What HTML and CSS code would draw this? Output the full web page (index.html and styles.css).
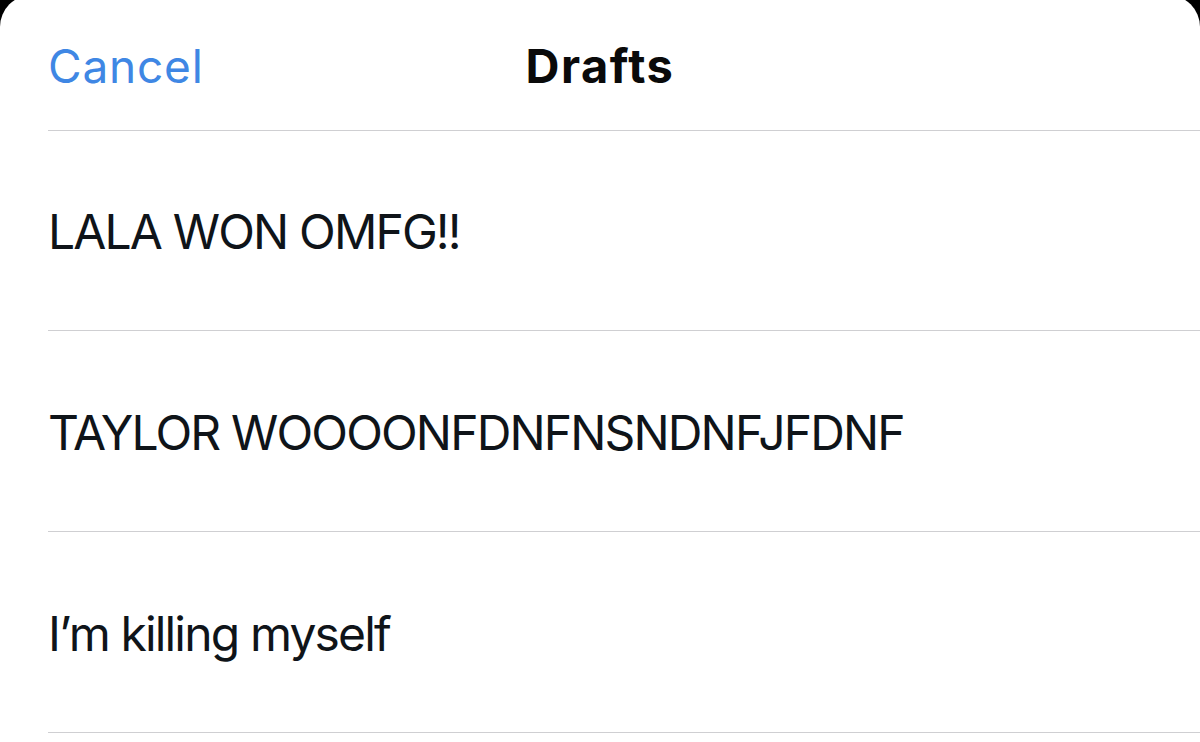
FILE: index.html
```html
<!DOCTYPE html>
<html lang="en">
<head>
<meta charset="utf-8">
<title>Drafts</title>
<link rel="stylesheet" href="styles.css">
</head>
<body>
<div class="sheet">
  <header class="header">
    <button class="cancel">Cancel</button>
    <h1 class="title">Drafts</h1>
    <span class="spacer"></span>
  </header>
  <ul class="drafts">
    <li class="draft">LALA WON OMFG!!</li>
    <li class="draft">TAYLOR WOOOONFDNFNSNDNFJFDNF</li>
    <li class="draft">I’m killing myself</li>
  </ul>
</div>
</body>
</html>
```
FILE: styles.css
```css
html, body {
  margin: 0;
  padding: 0;
  background: #000;
  height: 100%;
  overflow: hidden;
}

.sheet {
  margin-top: -5px;
  background: #fff;
  border-radius: 32px 32px 0 0;
  padding-left: 48px;
  height: 760px;
  font-family: Inter, "Liberation Sans", sans-serif;
  color: #0f1419;
}

.header {
  display: grid;
  grid-template-columns: 1fr auto 1fr;
  align-items: center;
  height: 136px;
  padding-top: 6px;
  box-sizing: border-box;
  border-bottom: 1px solid #cfcfd2;
  padding-right: 48px;
}

.cancel {
  justify-self: start;
  background: none;
  border: 0;
  padding: 0;
  font-family: Inter, "Liberation Sans", sans-serif;
  font-size: 46px;
  color: #3f87e4;
  letter-spacing: 0.8px;
}

.title {
  margin: 0 0 0 0;
  font-size: 47px;
  font-weight: 700;
  color: #0a0a0a;
  letter-spacing: 1.5px;
}

.drafts {
  list-style: none;
  margin: 0;
  padding: 0;
}

.draft {
  display: flex;
  align-items: center;
  height: 200px;
  border-bottom: 1px solid #cfcfd2;
  padding-left: 0;
  padding-top: 2px;
  box-sizing: border-box;
  font-size: 48px;
  letter-spacing: -1.85px;
}

.draft + .draft {
  height: 201px;
}
```
